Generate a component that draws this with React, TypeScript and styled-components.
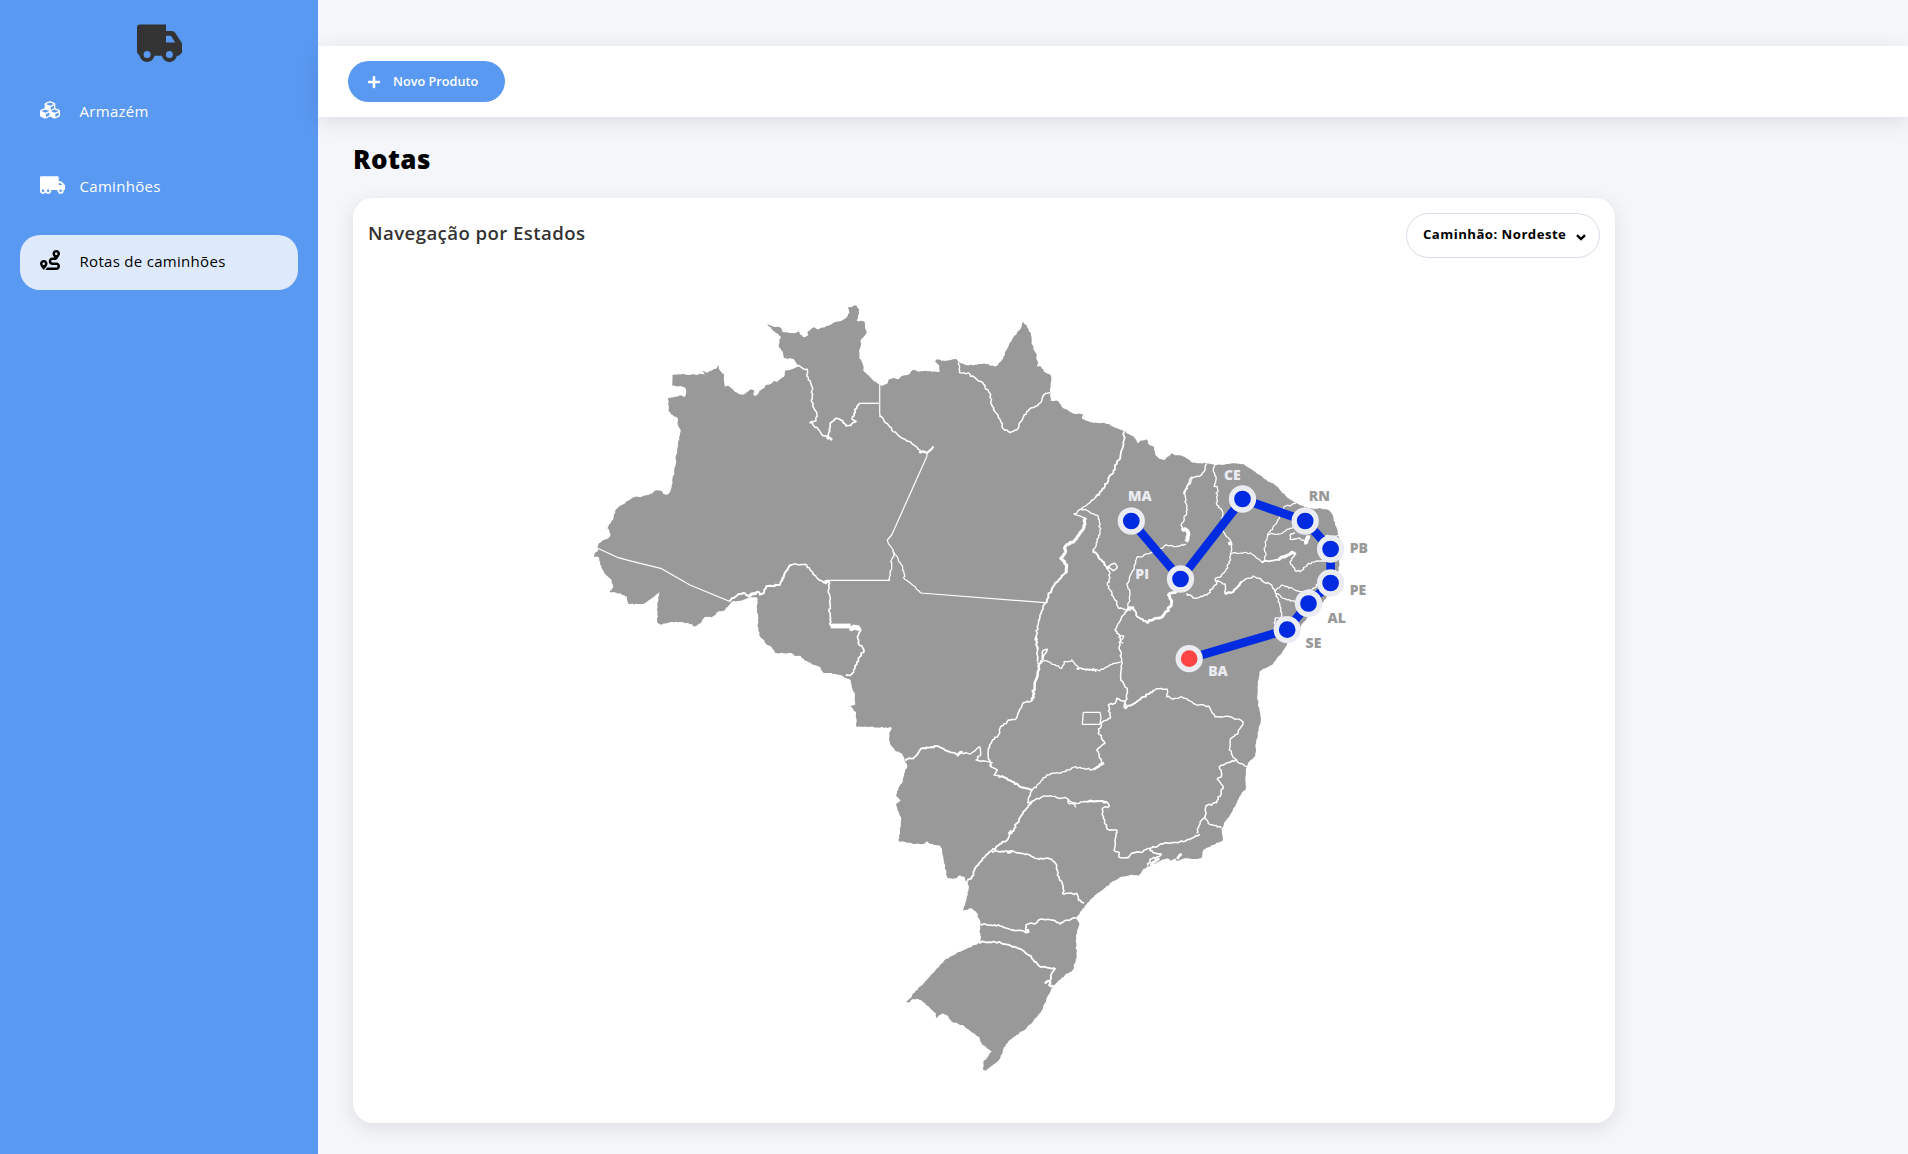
import React from "react";
import styled, { createGlobalStyle } from "styled-components";
import { FaCubes, FaPlus, FaRoute, FaTruckMoving } from "react-icons/fa";

const GlobalStyle = createGlobalStyle`
  * { box-sizing: border-box; }
  body {
    margin: 0;
    background: #f5f6fa;
    font-family: "Open Sans", "Noto Sans", sans-serif;
  }
`;

const Page = styled.div`
  display: flex;
  height: 1154px;
  overflow: hidden;
`;

const Sidebar = styled.aside`
  width: 318px;
  flex: none;
  padding: 24px 20px 0;
  background: #5a99f2;
  display: flex;
  flex-direction: column;
`;

const Logo = styled.svg`
  width: 45px;
  height: 39px;
  margin: 0 auto 22px;
  fill: #333;
`;

const Menu = styled.nav`
  display: flex;
  flex-direction: column;
  gap: 20px;
`;

const MenuItem = styled.a<{ $active?: boolean }>`
  display: flex;
  align-items: center;
  height: 55px;
  padding: 0 20px 3px;
  border-radius: 20px;
  font-size: 15px;
  letter-spacing: 0.3px;
  color: ${(p) => (p.$active ? "#000" : "#fff")};
  background: ${(p) => (p.$active ? "#deeafc" : "transparent")};
`;

const MenuIcon = styled.span<{ $wide?: boolean }>`
  width: 39.5px;
  display: flex;
  margin-top: -3px;
  svg {
    width: ${(p) => (p.$wide ? 25 : 20)}px;
    height: 20px;
  }
`;

const Main = styled.main`
  flex: 1;
  min-width: 0;
  padding-top: 46px;
`;

const TopBar = styled.header`
  height: 71px;
  padding: 0 30px;
  display: flex;
  align-items: center;
  background: #fff;
  box-shadow: 0 5px 20px rgba(0, 0, 0, 0.1);
`;

const NewButton = styled.button`
  display: flex;
  align-items: center;
  gap: 12px;
  width: 157px;
  height: 41px;
  padding: 0 0 0 19px;
  border: 0;
  border-radius: 21px;
  background: #5a99f2;
  color: #fff;
  font: 600 12.7px "Open Sans", "Noto Sans", sans-serif;
  svg { width: 14px; height: 14px; }
`;

const ButtonText = styled.span`
  margin-top: -2px;
`;

const Content = styled.section`
  padding: 23px 0 0 35px;
`;

const PageTitle = styled.h1`
  margin: 0;
  height: 58px;
  font-size: 26px;
  line-height: 38px;
  font-weight: 800;
  letter-spacing: 0.4px;
  color: #000;
`;

const Card = styled.div`
  width: 1262px;
  height: 925px;
  border-radius: 20px;
  background: #fff;
  box-shadow: 0 5px 20px rgba(0, 0, 0, 0.1);
  display: flex;
  flex-direction: column;
`;

const CardHeader = styled.div`
  height: 72px;
  padding: 15px 15px 0;
  display: flex;
  justify-content: space-between;
  align-items: flex-start;
`;

const CardTitle = styled.h2`
  margin: 0;
  font-size: 18.6px;
  line-height: 40px;
  font-weight: 600;
  letter-spacing: 0.42px;
  color: #333;
`;

const TruckSelect = styled.button`
  display: flex;
  align-items: center;
  justify-content: space-between;
  width: 194px;
  height: 45px;
  padding: 0 13px 3px 16px;
  border: 1px solid #dadbe8;
  border-radius: 23px;
  background: #fff;
  color: #000;
  font: 700 13.2px "Open Sans", "Noto Sans", sans-serif;
  letter-spacing: 0.46px;
  svg { margin-top: 6px; }
`;

const MapCanvas = styled.svg`
  display: block;
  width: 1262px;
  height: 853px;
`;

const StateLabel = styled.text<{ $light?: boolean }>`
  font: 800 14px "Open Sans", "Noto Sans", sans-serif;
  fill: ${(p) => (p.$light ? "#ebecf2" : "#999")};
`;

type Point = [number, number];
type Piece = [string, string];

// Each map sheet stores its points in thirds of a pixel from its own origin.
const sheets: Record<string, Point> = {
  nw: [580, 290],
  n: [880, 290],
  ne: [1060, 400],
  e: [1000, 600],
  s: [880, 780],
  w: [740, 540],
};

const toPoints = ([sheet, text]: Piece): Point[] =>
  text.trim().split(/\s+/).map((pair) => {
    const [x, y] = pair.split(",").map(Number);
    return [sheets[sheet][0] + x / 3, sheets[sheet][1] + y / 3];
  });

// Adds small, repeatable bends between points so rivers and coasts look natural.
const roughen = (points: Point[], amount: number): Point[] => {
  let seed = 7;
  const next = () => {
    seed = (seed * 16807) % 2147483647;
    return seed / 2147483647 - 0.5;
  };
  const out: Point[] = [points[0]];
  for (let i = 1; i < points.length; i += 1) {
    const [ax, ay] = points[i - 1];
    const [bx, by] = points[i];
    const steps = Math.max(1, Math.round(Math.hypot(bx - ax, by - ay) / 2));
    for (let s = 1; s < steps; s += 1) {
      out.push([ax + ((bx - ax) * s) / steps + next() * amount, ay + ((by - ay) * s) / steps + next() * amount]);
    }
    out.push([bx, by]);
  }
  return out;
};

const toPath = (points: Point[]) => "M" + points.map(([x, y]) => `${x.toFixed(1)} ${y.toFixed(1)}`).join("L");

const coast: Piece[] = [
  ["nw", "53,775 57,760 70,750 85,745 92,735 88,722 82,715 88,702 98,690 102,672 108,658 125,645 145,632 162,622 185,620 205,615 218,610 224,602 245,602 250,612 262,614 270,606 275,590 285,530 292,475 300,435 302,420 295,408 293,385 278,375 265,364 265,324 290,320 300,316 315,320 318,312 318,298 308,290 277,287 277,256 295,253 375,254 368,242 382,248 400,238 408,236 415,225 420,242 432,252 434,290 446,288 462,302 480,313 492,313 505,304 512,298 522,300 520,314 526,318 538,304 548,296 560,284 572,282 582,272 592,276 600,268 612,260 615,242 635,238 655,230 648,218 640,206 612,205 608,185 597,172 598,150 603,140 590,130 575,118 562,102 580,110 600,112 608,126 625,128 640,130 655,124 660,134 675,142 685,136 683,124 692,118 700,112 712,118 735,112 750,105 760,98 788,90 800,82 808,68 804,52 815,52 828,46 838,58 837,72 830,92 854,96 855,110 860,128 850,142 842,150 843,165 837,180 838,205 848,222 852,245 865,255 878,270 898,283"],
  ["n", "5,288 20,282 28,268 40,264 55,268 62,260 85,254 98,240 115,245 140,242 155,245 178,246 177,225 165,215 170,208 185,213 212,210 228,206 236,214 242,220 260,226 285,224 300,222 325,222 330,227 350,228 362,215 370,205 378,182 385,170 400,142 412,126 424,112 430,96 440,106 447,124 453,130 455,155 460,178 468,190 470,208 474,216 470,230 484,230 492,245 512,256 514,272 510,300 512,332 535,334 550,355 578,370 610,374 606,386 630,396 660,400 668,398 690,404 712,415 730,422 740,430 762,440 775,460 780,452 800,448 808,464 822,470 826,494 838,506 855,510 875,490 885,496 905,497 925,508 940,518 955,520"],
  ["ne", "420,190 440,190 465,196 500,192 525,190 548,192 575,208 600,225 625,245 640,250 660,270 685,295 710,310 735,322 765,328 780,324 800,328 812,336 820,350 825,375 833,395 838,415 840,450 838,480 836,510 828,535 815,560 800,590 785,610 765,632 740,655 715,690 700,705 680,735 660,765 640,790 625,800 610,806"],
  ["e", "778,215 775,240 772,290 778,330 782,362 773,400 768,430 766,468 745,488 740,500 736,535 738,565 718,590 708,612 690,645 672,670 664,688 668,722 640,735 610,750 604,775 550,776 530,782 525,775 512,782 500,775 485,780 470,788 455,795 440,800 425,815 415,828 400,825 380,828 360,832 330,850 310,868 290,882 270,900"],
  ["s", "615,378 605,392 595,405 588,415 598,430 595,445 588,465 588,500 590,515 587,545 578,570 555,585 535,602 518,622 505,645 495,670 488,688 470,712 455,730 430,752 400,772 378,792 368,815 355,842 335,858 318,872 310,870 311,842 325,828 335,815 318,802 305,790 298,772 270,752 248,735 215,725 200,705 188,700 168,714 168,700 150,685 128,665 115,656 98,657 90,666 78,665 95,650 100,640 120,620 140,600 158,580 180,555 192,542 215,528 240,515 265,503 285,495 298,487 303,470 298,455 302,430 296,415 290,398 275,385 262,390 248,392 255,375 260,350 266,325 264,305 256,302 254,290 240,286 225,295 202,295 195,260 190,235 186,210 178,196 150,192 140,184 130,192 95,190 75,186 56,185 60,150 64,115 57,98 50,80 48,72 62,62 48,45 55,25 68,5"],
  ["w", "490,712 495,690 502,680 493,655 485,640 465,632 452,615 447,600 448,580 455,563 350,560 347,515 330,498 345,495 345,465 335,440 332,420 318,415 300,405 285,402 250,398 238,380 215,372 195,362 182,348 165,348 150,338 130,340 105,338 95,322 75,308 60,290 54,262 55,235 50,215 53,190 50,172 30,172"],
  ["nw", "480,932 455,935 450,942 430,962 415,965 395,982 375,980 362,1000 342,1010 335,1002 305,996 265,998 245,1004 232,998 232,940 240,906 215,925 190,942 145,942 140,920 120,910 88,905 100,892 95,870 78,855 65,835 58,812 55,800 42,800 45,788 55,782"],
];

type Border = { at: string; d: string; w?: number; straight?: boolean };

const borders: Border[] = [
  { at: "nw", d: "53,775 115,803 148,812 242,835 330,885 448,934", straight: true },
  { at: "nw", d: "448,934 475,912 495,910 505,918 535,905 540,914 552,905 558,890 600,884 612,855 622,840 632,823", w: 2 },
  { at: "nw", d: "632,823 675,823 690,840 712,865 730,878 745,871", w: 1.5 },
  { at: "nw", d: "505,918 530,908", w: 3 },
  { at: "nw", d: "735,875 750,876", w: 3 },
  { at: "nw", d: "745,871 930,871", straight: true },
  { at: "nw", d: "930,871 930,850 935,830 932,815 942,795 940,780", w: 1.3 },
  { at: "n", d: "40,780 25,760 22,750 35,735 140,500 142,488", straight: true },
  { at: "nw", d: "750,878 745,900 750,930 748,965 752,1008", w: 1.6 },
  { at: "nw", d: "752,1008 812,1008", w: 4.8, straight: true },
  { at: "nw", d: "812,1013 840,1013", w: 5 },
  { at: "w", d: "350,256 362,268 352,290 355,310 372,330 355,355 345,385 335,402 318,408", w: 1.7 },
  { at: "nw", d: "648,222 668,235 682,238 680,258 692,280 697,300 694,330 702,355 712,378 708,392 690,398 715,418 730,438 745,440", w: 1.5 },
  { at: "nw", d: "742,438 756,450", w: 2.6 },
  { at: "nw", d: "747,440 750,400 770,385 788,392 798,408 815,402 828,394 816,388 822,370 837,340", w: 1.7 },
  { at: "nw", d: "837,340 898,340", w: 1.3, straight: true },
  { at: "nw", d: "899,283 899,372", w: 1.2, straight: true },
  { at: "n", d: "0,372 12,392 25,405 40,425 60,440 95,460 125,485", w: 1.5 },
  { at: "n", d: "118,484 142,488 160,469", w: 2.2 },
  { at: "n", d: "42,785 55,808 68,835 74,868 90,878 108,895 122,909" },
  { at: "n", d: "122,909 495,938", straight: true },
  { at: "n", d: "238,214 238,248 270,252", w: 1.3 },
  { at: "n", d: "270,252 290,268 308,278 315,292 332,315 332,340 345,365 360,388 368,415 390,428 410,420 418,400 440,365 475,345 488,320 510,308", w: 1.5 },
  { at: "n", d: "733,424 732,450 725,480 716,510 705,525 700,548 685,565 675,590 645,625", w: 1.8 },
  { at: "n", d: "645,625 605,655 582,672 612,682 620,688", w: 1.3 },
  { at: "n", d: "616,684 612,712 600,728 588,748 557,766", w: 3 },
  { at: "n", d: "557,766 555,790 542,805 560,825 555,850", w: 3 },
  { at: "n", d: "555,850 525,880 505,915 495,940", w: 2 },
  { at: "n", d: "495,940 480,975 472,1010 468,1040 472,1080", w: 1.6 },
  { at: "w", d: "888,290 892,345 892,365", w: 1.7 },
  { at: "w", d: "892,368 905,368 912,345 922,328 908,332 903,370", w: 1.6 },
  { at: "w", d: "900,368 893,400 884,430 876,482", w: 2.5 },
  { at: "w", d: "876,482 850,488 838,510 828,536 805,540 780,565 775,585 755,605 745,625 745,650 752,680", w: 1.5 },
  { at: "n", d: "605,655 628,665 655,680 660,720 652,755 640,778", w: 1.3 },
  { at: "n", d: "640,778 655,800 678,828", w: 2 },
  { at: "n", d: "678,828 700,842 712,832 705,820 692,824 680,835 690,850 682,885 700,920 716,955 752,962", w: 1.4 },
  { at: "n", d: "935,560 912,605 918,640 920,670 905,700 908,720", w: 1.3 },
  { at: "n", d: "908,714 922,722 925,735 918,755", w: 3.8 },
  { at: "n", d: "918,762 885,770 860,765 840,775 810,790 770,803 760,840 740,882 750,912 745,955", w: 1.3 },
  { at: "n", d: "740,958 762,952", w: 3 },
  { at: "ne", d: "440,190 435,210 420,228 398,232 385,255 370,280", w: 1.4 },
  { at: "ne", d: "220,620 232,650 260,668", w: 1.8 },
  { at: "ne", d: "260,668 285,655 305,652 330,620 335,605 325,585 350,572", w: 2.8 },
  { at: "ne", d: "380,580 405,595 440,585 460,560 475,540", w: 1.4 },
  { at: "ne", d: "465,196 460,215 468,230 463,260 472,262 470,290 470,315 485,330 488,350 490,395 515,430 512,460 508,490 495,515 465,540", w: 1.3 },
  { at: "ne", d: "508,425 516,432", w: 3 },
  { at: "ne", d: "465,540 495,552 495,580 515,578 545,545 580,528 610,545 635,555 645,575", w: 1.4 },
  { at: "ne", d: "495,580 515,578 545,545", w: 2 },
  { at: "ne", d: "510,460 560,458 580,465 605,485 610,485 618,460 612,445 620,420 625,400 650,370 658,350 672,320 708,310", w: 1.2 },
  { at: "ne", d: "622,402 660,402 690,385 708,375", w: 1.2 },
  { at: "ne", d: "705,398 692,402 690,418 720,415 740,432", w: 1.3 },
  { at: "ne", d: "740,432 744,406", w: 4 },
  { at: "ne", d: "790,408 838,408", w: 1.2 },
  { at: "ne", d: "605,485 650,480 680,465", w: 1.8 },
  { at: "ne", d: "655,478 682,466 695,457 706,465", w: 3 },
  { at: "ne", d: "705,465 690,485 705,512 720,515 745,490 785,482 825,480", w: 1.3 },
  { at: "ne", d: "645,575 665,555 720,575 755,570 780,548", w: 1.2 },
  { at: "ne", d: "645,575 670,595 710,608", w: 1.2 },
  { at: "ne", d: "650,582 660,620 665,650 645,655 642,668 650,680", w: 1.3 },
  { at: "e", d: "385,28 365,50 345,90 360,108 358,140 365,180 362,240 382,270 375,325", w: 1.5 },
  { at: "e", d: "355,110 372,108 360,125 370,130", w: 1.2 },
  { at: "e", d: "125,180 145,185 185,205 192,185 205,185 215,180 235,205 280,212 310,208 340,190 362,186", w: 1.3 },
  { at: "e", d: "230,205 265,208 285,208 288,216", w: 1.4 },
  { at: "e", d: "375,325 375,305 350,295 345,310 325,315 330,355 303,370 295,400 315,430 290,450 305,490", w: 1.5 },
  { at: "e", d: "312,488 280,508", w: 2.4 },
  { at: "e", d: "280,508 220,502 190,515 140,525 120,548 95,572", w: 1.4 },
  { at: "e", d: "250,337 300,337 303,352 300,373 247,373 250,337", w: 1.3, straight: true },
  { at: "e", d: "375,325 410,305 460,270", w: 1.9 },
  { at: "e", d: "460,270 482,265 502,268 500,290 520,297 545,290 590,315 625,318 645,350 690,350 725,362 728,375 705,405 690,425 688,450 710,480 740,500", w: 1.4 },
  { at: "e", d: "710,480 680,488 658,500 665,525 652,538 670,560 650,608 618,618 615,648 600,665 590,700", w: 1.5 },
  { at: "e", d: "615,648 625,670 664,684", w: 1.4 },
  { at: "e", d: "600,703 550,725 500,728 450,745 420,757 395,760 385,773 360,773", w: 1.6 },
  { at: "e", d: "360,773 358,758 342,750 345,725 348,700 350,690 322,688 310,655 307,625 328,618 320,605 290,603 260,605 225,609 205,605 200,595 135,588 95,602", w: 1.5 },
  { at: "e", d: "205,600 210,612 225,612 227,622", w: 1.3 },
  { at: "e", d: "260,603 300,603 318,608", w: 1.8 },
  { at: "e", d: "450,745 460,758 484,762 476,770 450,778 443,797", w: 1.6 },
  { at: "e", d: "478,775 460,787 450,795", w: 2.6 },
  { at: "e", d: "532,777 545,762", w: 2.8 },
  { at: "w", d: "495,658 520,655 545,625 590,618 620,632 650,645", w: 1.8 },
  { at: "w", d: "650,645 668,637", w: 3 },
  { at: "w", d: "668,638 690,642 718,620 722,640 708,660 758,668", w: 1.4 },
  { at: "w", d: "752,668 755,682 772,690 762,705 775,706", w: 1.5 },
  { at: "w", d: "775,706 800,715 840,740 875,748", w: 2.1 },
  { at: "w", d: "877,750 865,775 863,788 878,786", w: 1.5 },
  { at: "s", d: "455,68 430,95 410,130 385,175 335,212 308,235 285,265 275,295 262,304", w: 1.8 },
  { at: "s", d: "395,152 388,162", w: 3 },
  { at: "s", d: "335,214 390,214 440,222 465,235 515,238 530,255 532,285 550,320 550,343 590,340 595,360 612,370", w: 1.6 },
  { at: "s", d: "382,215 396,214", w: 2.8 },
  { at: "s", d: "302,432 360,438 405,452 440,453 438,435 470,428 480,418 520,420 540,432 560,420 590,415", w: 1.6 },
  { at: "s", d: "435,452 448,452", w: 3.8 },
  { at: "s", d: "296,486 345,486 385,494 430,512 455,535 480,560 525,566 515,580 510,600", w: 1.8 },
  { at: "s", d: "495,606 510,604 508,616 520,618", w: 2.4 },
];

type Stop = { name: string; x: number; y: number; lx: number; ly: number; light?: boolean };

const stops: Stop[] = [
  { name: "MA", x: 1131.3, y: 521, lx: 1128, ly: 500.6, light: true },
  { name: "PI", x: 1180.5, y: 579, lx: 1135.3, ly: 578.6, light: true },
  { name: "CE", x: 1242.5, y: 499, lx: 1224, ly: 479.6, light: true },
  { name: "RN", x: 1305.2, y: 521, lx: 1308.7, ly: 500.6 },
  { name: "PB", x: 1330.6, y: 549, lx: 1349.7, ly: 552.6 },
  { name: "PE", x: 1330.6, y: 583, lx: 1349.7, ly: 594.6 },
  { name: "AL", x: 1308.5, y: 603.5, lx: 1327.5, ly: 622.6 },
  { name: "SE", x: 1287.2, y: 629.7, lx: 1305.6, ly: 647.6 },
  { name: "BA", x: 1189.2, y: 658.7, lx: 1208.2, ly: 675.6, light: true },
];

const coastPath = toPath(roughen(coast.flatMap(toPoints), 1.2)) + "Z";

const BrazilMap = () => (
  <MapCanvas viewBox="353 270 1262 853">
    <path d={coastPath} fill="#999" />
    <g fill="none" stroke="#fff" strokeLinejoin="round">
      {borders.map((b, i) => {
        const points = toPoints([b.at, b.d]);
        return <path key={i} d={toPath(b.straight ? points : roughen(points, 2.1))} strokeWidth={b.w ?? 1.2} />;
      })}
    </g>
    <path d={toPath(stops.map((s): Point => [s.x, s.y]))} fill="none" stroke="#002be0" strokeWidth="8.6" />
    {stops.map((s) => (
      <g key={s.name}>
        <circle cx={s.x} cy={s.y} r="11" fill={s.name === "BA" ? "#ff4444" : "#002be0"} stroke="#ebecf2" strokeWidth="5.3" />
        <StateLabel x={s.lx} y={s.ly} $light={s.light}>{s.name}</StateLabel>
      </g>
    ))}
  </MapCanvas>
);

const App = () => (
  <>
    <GlobalStyle />
    <Page>
      <Sidebar>
        <Logo viewBox="0 0 45 39">
          <path
            fillRule="evenodd"
            d="M3 .5H29V7H35Q37 7 38 8.6L44.4 18.3Q45 19.3 45 20.5V28.5L41.8 31.8H39.9A7.6 7.6 0 0 1 24.9 31.8H17.5A7.6 7.6 0 0 1 2.6 31.8L0 28.4V3.5Q0 .5 3 .5ZM29 11.8V18.4H38.2L34.2 12.3Q33.9 11.8 33.2 11.8ZM6.6 30.6a3.5 3.5 0 1 0 7 0a3.5 3.5 0 1 0-7 0ZM28.9 30.6a3.5 3.5 0 1 0 7 0a3.5 3.5 0 1 0-7 0Z"
          />
        </Logo>
        <Menu>
          <MenuItem>
            <MenuIcon><FaCubes /></MenuIcon>Armazém
          </MenuItem>
          <MenuItem>
            <MenuIcon $wide><FaTruckMoving /></MenuIcon>Caminhões
          </MenuItem>
          <MenuItem $active>
            <MenuIcon><FaRoute /></MenuIcon>Rotas de caminhões
          </MenuItem>
        </Menu>
      </Sidebar>
      <Main>
        <TopBar>
          <NewButton>
            <FaPlus />
            <ButtonText>Novo Produto</ButtonText>
          </NewButton>
        </TopBar>
        <Content>
          <PageTitle>Rotas</PageTitle>
          <Card>
            <CardHeader>
              <CardTitle>Navegação por Estados</CardTitle>
              <TruckSelect>
                Caminhão: Nordeste
                <svg width="10" height="7" viewBox="0 0 10 7">
                  <path d="M1 1.2L5 5L9 1.2" fill="none" stroke="#000" strokeWidth="2.4" />
                </svg>
              </TruckSelect>
            </CardHeader>
            <BrazilMap />
          </Card>
        </Content>
      </Main>
    </Page>
  </>
);

export default App;
